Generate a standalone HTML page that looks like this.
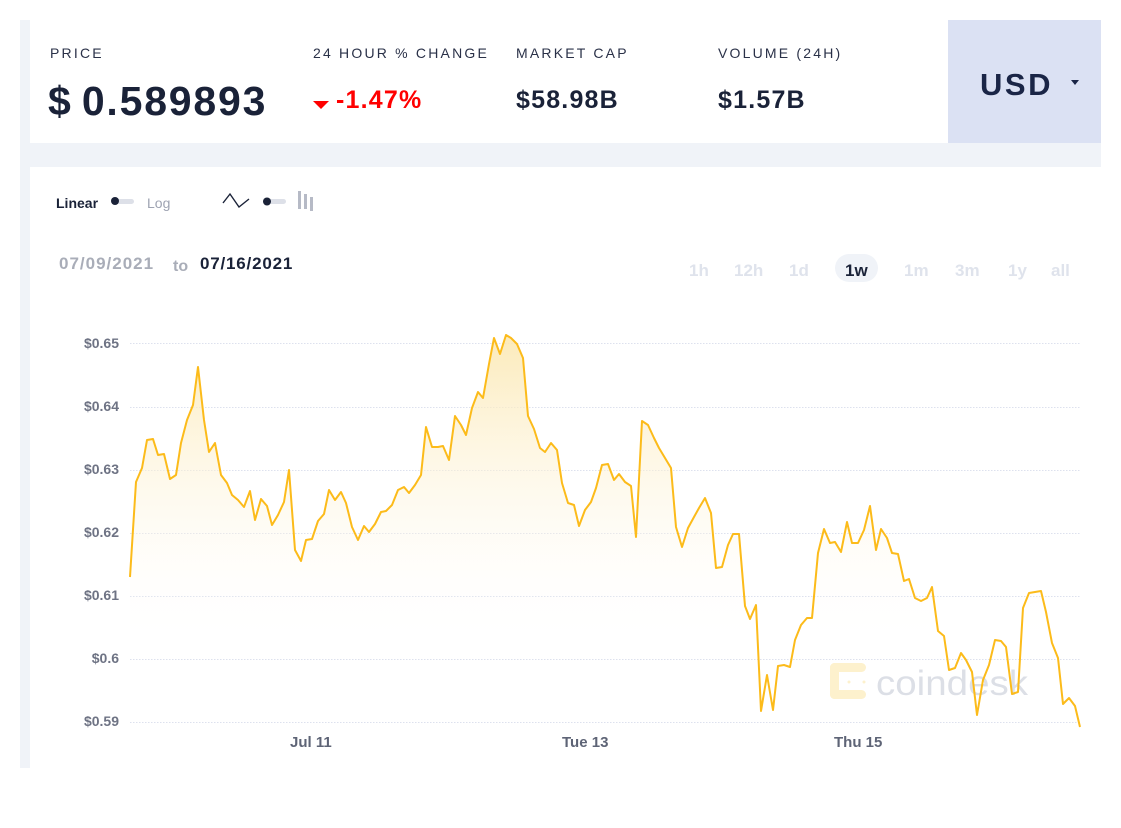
<!DOCTYPE html>
<html><head><meta charset="utf-8"><style>
*{margin:0;padding:0;box-sizing:border-box}
body{width:1121px;height:828px;background:#fff;font-family:"Liberation Sans",sans-serif;position:relative;overflow:hidden;color:#1a2238}
.a{position:absolute;white-space:nowrap}
.lbl{font-size:14px;letter-spacing:2.2px;color:#2a3148;top:45px}
.val{font-size:25px;font-weight:bold;top:86px;letter-spacing:1.2px}
.tf{font-size:17px;font-weight:bold;color:#dfe3ec;top:261px}
.yl{font-size:14px;font-weight:bold;color:#6e7384;right:1002px}
.xl{font-size:15px;font-weight:bold;color:#5e6476;top:734px}
</style></head><body>
<div class="a" style="left:20px;top:20px;width:10px;height:748px;background:#f0f3f8"></div>
<div class="a" style="left:30px;top:143px;width:1071px;height:24px;background:#f0f3f8"></div>
<div class="a" style="left:948px;top:20px;width:153px;height:123px;background:#dbe1f3"></div>
<div class="a" style="left:980px;top:67px;font-size:31px;font-weight:bold;letter-spacing:2.5px;color:#1a2546">USD</div>
<div class="a" style="left:1071px;top:80px;width:0;height:0;border-left:4px solid transparent;border-right:4px solid transparent;border-top:5px solid #1a2546"></div>

<div class="a lbl" style="left:50px">PRICE</div>
<div class="a lbl" style="left:313px">24 HOUR % CHANGE</div>
<div class="a lbl" style="left:516px">MARKET CAP</div>
<div class="a lbl" style="left:718px">VOLUME (24H)</div>
<div class="a" style="left:48px;top:78px;font-size:41px;font-weight:bold;letter-spacing:1.8px">$<span style="margin-left:-4px"> </span>0.589893</div>
<div class="a" style="left:313px;top:101px;width:0;height:0;border-left:8px solid transparent;border-right:8px solid transparent;border-top:8px solid #f00"></div>
<div class="a val" style="left:336px;color:#f00">-1.47%</div>
<div class="a val" style="left:516px">$58.98B</div>
<div class="a val" style="left:718px">$1.57B</div>

<div class="a" style="left:56px;top:195px;font-size:14px;font-weight:bold">Linear</div>
<div class="a" style="left:112px;top:199px;width:22px;height:5px;border-radius:3px;background:#dde0e8"></div>
<div class="a" style="left:111px;top:197px;width:8px;height:8px;border-radius:50%;background:#1a2238"></div>
<div class="a" style="left:147px;top:195px;font-size:14px;color:#9ea3b2">Log</div>
<svg class="a" style="left:222px;top:190px" width="80" height="22"><path d="M1,13 L8,4 L17,17 L27,9" fill="none" stroke="#1a2238" stroke-width="1.4"/><rect x="42" y="9" width="22" height="5" rx="2.5" fill="#dde0e8"/><circle cx="45" cy="11.5" r="4" fill="#1a2238"/></svg>
<svg class="a" style="left:296px;top:190px" width="24" height="22"><rect x="2" y="1" width="3" height="18" fill="#b6bac6"/><rect x="8" y="4" width="3" height="15" fill="#b6bac6"/><rect x="14" y="7" width="3" height="14" fill="#b6bac6"/></svg>

<div class="a" style="left:59px;top:254px;font-size:17px;font-weight:bold;color:#a9adb8;letter-spacing:1px">07/09/2021</div>
<div class="a" style="left:173px;top:258px;font-size:16px;font-weight:bold;color:#a9adb8">to</div>
<div class="a" style="left:200px;top:254px;font-size:17px;font-weight:bold;color:#1a2238;letter-spacing:0.8px">07/16/2021</div>

<div class="a tf" style="left:689px">1h</div>
<div class="a tf" style="left:734px">12h</div>
<div class="a tf" style="left:789px">1d</div>
<div class="a" style="left:835px;top:254px;width:43px;height:28px;border-radius:14px;background:#f0f3f8"></div>
<div class="a tf" style="left:845px;color:#1a2238">1w</div>
<div class="a tf" style="left:904px">1m</div>
<div class="a tf" style="left:955px">3m</div>
<div class="a tf" style="left:1008px">1y</div>
<div class="a tf" style="left:1051px">all</div>

<div class="a yl" style="top:335px">$0.65</div>
<div class="a yl" style="top:398px">$0.64</div>
<div class="a yl" style="top:461px">$0.63</div>
<div class="a yl" style="top:524px">$0.62</div>
<div class="a yl" style="top:587px">$0.61</div>
<div class="a yl" style="top:650px">$0.6</div>
<div class="a yl" style="top:713px">$0.59</div>
<div class="a xl" style="left:290px">Jul 11</div>
<div class="a xl" style="left:562px">Tue 13</div>
<div class="a xl" style="left:834px">Thu 15</div>

<svg class="a" style="left:0;top:0" width="1121" height="828">
<defs><linearGradient id="g" x1="0" y1="330" x2="0" y2="650" gradientUnits="userSpaceOnUse"><stop offset="0" stop-color="#fbe7b0" stop-opacity="0.9"/><stop offset="1" stop-color="#fff" stop-opacity="0"/></linearGradient></defs>
<g stroke="#dde1ee" stroke-width="1" stroke-dasharray="1.5,1.5">
<line x1="130" y1="343.5" x2="1080" y2="343.5"/><line x1="130" y1="407.5" x2="1080" y2="407.5"/><line x1="130" y1="470.5" x2="1080" y2="470.5"/><line x1="130" y1="533.5" x2="1080" y2="533.5"/><line x1="130" y1="596.5" x2="1080" y2="596.5"/><line x1="130" y1="659.5" x2="1080" y2="659.5"/><line x1="130" y1="722.5" x2="1080" y2="722.5"/></g>
<g opacity="0.9">
<g fill="#fdf0c8"><rect x="830" y="663" width="36" height="9" rx="4.5"/><rect x="830" y="663" width="9" height="36" rx="4.5"/><rect x="830" y="690" width="36" height="9" rx="4.5"/><circle cx="849" cy="682" r="1.5"/><circle cx="864" cy="682" r="1.5"/><circle cx="864" cy="696" r="1.5"/></g>
<text x="876" y="695" font-family="Liberation Sans,sans-serif" font-size="35" fill="#d9dce4" textLength="152" lengthAdjust="spacingAndGlyphs">coindesk</text></g>
<polygon fill="url(#g)" points="130,577 136,482 142,468 147,440 153,439 158,455 164,454 170,479 176,475 181,443 187,420 193,405 198,367 204,420 209,452 215,443 221,475 227,483 232,495 238,500 244,507 250,491 255,520 261,499 267,506 272,525 278,515 284,502 289,470 295,550 301,561 306,540 312,539 318,521 324,514 329,490 335,500 341,492 346,503 352,527 358,540 364,526 369,532 375,524 381,512 386,511 392,505 398,490 404,487 409,493 415,485 421,475 426,427 432,447 438,447 443,446 449,460 455,416 461,425 466,435 472,408 478,392 483,398 489,364 494,338 500,354 506,335 511,338 517,344 523,358 528,416 534,429 540,448 545,452 551,443 557,450 562,483 568,503 574,505 579,526 585,510 591,502 596,488 602,465 608,464 614,480 619,474 625,482 631,486 636,537 642,421 648,425 654,438 659,448 665,458 671,468 676,527 682,547 688,528 694,517 699,508 705,498 711,513 716,568 722,567 728,545 733,534 739,534 745,606 750,619 756,605 761,711 767,675 773,710 778,666 784,665 790,667 795,640 801,625 807,618 812,618 818,553 824,529 830,543 835,542 841,552 847,522 852,543 858,543 864,530 870,506 876,550 881,529 887,538 892,553 898,554 904,581 909,579 915,598 921,601 927,598 932,587 938,631 944,636 949,670 955,668 961,653 966,660 972,672 977,715 983,680 989,665 995,640 1001,641 1006,647 1012,694 1018,692 1023,608 1029,593 1035,592 1041,591 1046,612 1052,643 1058,658 1063,704 1069,698 1075,706 1080,727 1080,730 130,730"/>
<polyline fill="none" stroke="#fcbb1a" stroke-width="2" stroke-linejoin="round" points="130,577 136,482 142,468 147,440 153,439 158,455 164,454 170,479 176,475 181,443 187,420 193,405 198,367 204,420 209,452 215,443 221,475 227,483 232,495 238,500 244,507 250,491 255,520 261,499 267,506 272,525 278,515 284,502 289,470 295,550 301,561 306,540 312,539 318,521 324,514 329,490 335,500 341,492 346,503 352,527 358,540 364,526 369,532 375,524 381,512 386,511 392,505 398,490 404,487 409,493 415,485 421,475 426,427 432,447 438,447 443,446 449,460 455,416 461,425 466,435 472,408 478,392 483,398 489,364 494,338 500,354 506,335 511,338 517,344 523,358 528,416 534,429 540,448 545,452 551,443 557,450 562,483 568,503 574,505 579,526 585,510 591,502 596,488 602,465 608,464 614,480 619,474 625,482 631,486 636,537 642,421 648,425 654,438 659,448 665,458 671,468 676,527 682,547 688,528 694,517 699,508 705,498 711,513 716,568 722,567 728,545 733,534 739,534 745,606 750,619 756,605 761,711 767,675 773,710 778,666 784,665 790,667 795,640 801,625 807,618 812,618 818,553 824,529 830,543 835,542 841,552 847,522 852,543 858,543 864,530 870,506 876,550 881,529 887,538 892,553 898,554 904,581 909,579 915,598 921,601 927,598 932,587 938,631 944,636 949,670 955,668 961,653 966,660 972,672 977,715 983,680 989,665 995,640 1001,641 1006,647 1012,694 1018,692 1023,608 1029,593 1035,592 1041,591 1046,612 1052,643 1058,658 1063,704 1069,698 1075,706 1080,727"/>
</svg>
</body></html>
